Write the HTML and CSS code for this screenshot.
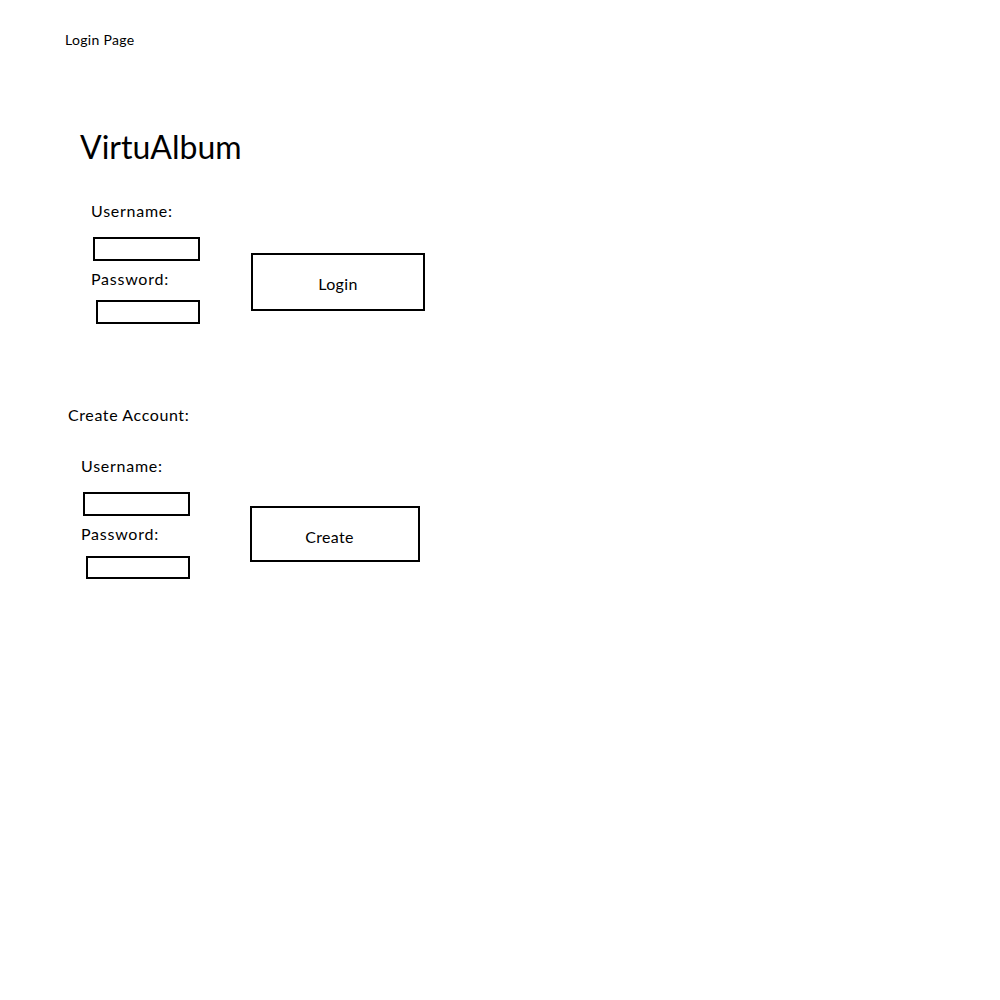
FILE: index.html
```html
<!DOCTYPE html>
<html>
<head>
<meta charset="utf-8">
<title>Login Page</title>
<link rel="stylesheet" href="styles.css">
</head>
<body>
<div class="page">
  <div class="caption">Login Page</div>
  <h1 class="brand">VirtuAlbum</h1>

  <section class="form-row login-row">
    <div class="fields">
      <label class="label">Username:</label>
      <div class="box box-user"></div>
      <label class="label label-pass">Password:</label>
      <div class="box box-pass"></div>
    </div>
    <div class="btn btn-login">Login</div>
  </section>

  <div class="section-title">Create Account:</div>

  <section class="form-row create-row">
    <div class="fields">
      <label class="label">Username:</label>
      <div class="box box-user"></div>
      <label class="label label-pass">Password:</label>
      <div class="box box-pass"></div>
    </div>
    <div class="btn btn-create">Create</div>
  </section>
</div>
</body>
</html>
```

FILE: styles.css
```css
html, body {
  margin: 0;
  padding: 0;
  background: #ffffff;
}
body {
  font-family: Lato, "Liberation Sans", sans-serif;
  color: #000;
  width: 1000px;
  height: 1000px;
}
.page {
  display: flex;
  flex-direction: column;
  align-items: flex-start;
}
.caption {
  margin: 31px 0 0 65px;
  font-size: 14px;
  line-height: 18px;
  letter-spacing: 0.3px;
}
.brand {
  margin: 78px 0 0 80px;
  font-weight: normal;
  font-size: 32px;
  line-height: 40px;
}
.form-row {
  display: flex;
  align-items: flex-start;
}
.fields {
  display: flex;
  flex-direction: column;
  align-items: flex-start;
}
.label {
  display: block;
  font-size: 16px;
  line-height: 20px;
  letter-spacing: 0.75px;
}
.box {
  box-sizing: border-box;
  border: 2px solid #000;
  height: 24px;
}
.box-user {
  width: 107px;
  margin: 16px 0 0 2px;
}
.label-pass {
  margin-top: 8px;
}
.box-pass {
  width: 104px;
  margin: 11px 0 0 5px;
}
.btn {
  box-sizing: border-box;
  border: 2px solid #000;
  display: flex;
  align-items: center;
  justify-content: center;
  font-size: 16px;
  letter-spacing: 0.3px;
}
.login-row {
  margin: 34px 0 0 91px;
}
.btn-login {
  width: 174px;
  height: 58px;
  margin: 52px 0 0 51px;
  padding-top: 2px;
}
.section-title {
  margin: 81px 0 0 68px;
  font-size: 16px;
  line-height: 20px;
  letter-spacing: 0.6px;
}
.create-row {
  margin: 31px 0 0 81px;
}
.create-row .box-user {
  margin-top: 16px;
}
.create-row .label-pass {
  margin-top: 8px;
}
.create-row .box-pass {
  height: 23px;
  margin-top: 12px;
}
.btn-create {
  width: 170px;
  height: 56px;
  margin: 50px 0 0 60px;
  padding-right: 11px;
  padding-top: 4px;
}
```
